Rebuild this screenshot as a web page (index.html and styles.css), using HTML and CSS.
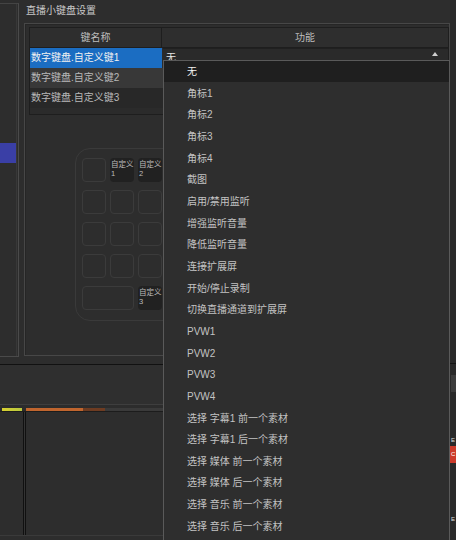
FILE: index.html
```html
<!DOCTYPE html>
<html lang="zh-CN">
<head>
<meta charset="utf-8">
<title>直播小键盘设置</title>
<link rel="stylesheet" href="styles.css">
</head>
<body>
<div class="window">
  <div class="main">
    <div class="top">
      <div class="leftpanel"><div class="lp-inner"><div class="lp-sel"></div></div></div>
      <div class="group">
        <div class="group-title">直播小键盘设置</div>
        <div class="group-frame">
          <div class="table">
            <div class="thead">
              <div class="th c1">键名称</div>
              <div class="th c2">功能</div>
            </div>
            <div class="tr sel">
              <div class="td c1">数字键盘.自定义键1</div>
              <div class="td c2">
                <div class="combo"><span class="combo-text">无</span>
                  <svg class="combo-arrow" width="8" height="6" viewBox="0 0 8 6"><path d="M4 1 L7 5 L1 5 Z" fill="#cfcfcf"/></svg>
                </div>
              </div>
            </div>
            <div class="tr alt"><div class="td c1">数字键盘.自定义键2</div><div class="td c2"></div></div>
            <div class="tr dark"><div class="td c1">数字键盘.自定义键3</div><div class="td c2"></div></div>
          </div>
          <div class="keypad">
            <div class="key"></div>
            <div class="key lab"><span>自定义</span><span>1</span></div>
            <div class="key lab"><span>自定义</span><span>2</span></div>
            <div class="key"></div>
            <div class="key"></div><div class="key"></div><div class="key"></div><div class="key"></div>
            <div class="key"></div><div class="key"></div><div class="key"></div><div class="key"></div>
            <div class="key"></div><div class="key"></div><div class="key"></div><div class="key"></div>
            <div class="key wide"></div>
            <div class="key lab"><span>自定义</span><span>3</span></div>
            <div class="key"></div>
          </div>
        </div>
      </div>
    </div>
    <div class="hline"></div>
    <div class="midbar"></div>
    <div class="meters">
      <div class="m-yellow"></div>
      <div class="m-sep"></div>
      <div class="m-orange"></div>
      <div class="m-brown"></div>
      <div class="m-rest"></div>
    </div>
    <div class="bottom">
      <div class="b-left"></div>
      <div class="b-sep"></div>
      <div class="b-main"></div>
    </div>
  </div>
  <div class="rstrip">
    <div class="rs-top"></div>
    <div class="rs-line"></div>
    <div class="rs-gap1"></div>
    <div class="rs-block"></div>
    <div class="rs-gap2"></div>
    <div class="rs-text">E</div>
    <div class="rs-red">C</div>
    <div class="rs-gap3"></div>
    <div class="rs-text">E</div>
  </div>
  <div class="popup">
    <div class="item hi">无</div>
    <div class="item">角标1</div>
    <div class="item">角标2</div>
    <div class="item">角标3</div>
    <div class="item">角标4</div>
    <div class="item">截图</div>
    <div class="item">启用/禁用监听</div>
    <div class="item">增强监听音量</div>
    <div class="item">降低监听音量</div>
    <div class="item">连接扩展屏</div>
    <div class="item">开始/停止录制</div>
    <div class="item">切换直播通道到扩展屏</div>
    <div class="item">PVW1</div>
    <div class="item">PVW2</div>
    <div class="item">PVW3</div>
    <div class="item">PVW4</div>
    <div class="item">选择 字幕1 前一个素材</div>
    <div class="item">选择 字幕1 后一个素材</div>
    <div class="item">选择 媒体 前一个素材</div>
    <div class="item">选择 媒体 后一个素材</div>
    <div class="item">选择 音乐 前一个素材</div>
    <div class="item">选择 音乐 后一个素材</div>
  </div>
</div>
</body>
</html>
```
FILE: styles.css
```css
* { box-sizing: border-box; }
html, body { margin: 0; padding: 0; }
body {
  width: 456px;
  height: 540px;
  overflow: hidden;
  background: #2d2d2d;
  font-family: "Liberation Sans", "Noto Sans CJK SC", sans-serif;
  font-size: 10px;
  color: #c2c2c2;
}
.window {
  position: relative;
  display: flex;
  width: 456px;
  height: 540px;
}
.main {
  width: 450px;
  display: flex;
  flex-direction: column;
}
.top {
  display: flex;
  height: 364px;
}
.leftpanel {
  width: 20px;
  margin-top: 3px;
  height: 354px;
  border-top: 1px solid #444;
  border-right: 1px solid #4a4a4a;
  border-bottom: 1px solid #4a4a4a;
}
.lp-inner {
  width: 17px;
  height: 100%;
  border-right: 1px solid #383838;
  padding-top: 139px;
}
.lp-sel {
  width: 16px;
  height: 20px;
  background: #3a3fa6;
}
.group {
  flex: 1;
  margin-left: 5px;
  display: flex;
  flex-direction: column;
}
.group-title {
  height: 23px;
  line-height: 21px;
  padding-left: 2px;
  color: #c8c8c8;
}
.group-frame {
  height: 333px;
  border: 1px solid #474747;
  box-shadow: inset 1px 1px 0 #262626;
  padding: 3px 0 0 4px;
}
.table {
  width: 420px;
  height: 88px;
  border: 1px solid #1e1e1e;
  background: #2b2b2b;
}
.thead {
  display: flex;
  height: 20px;
  border-bottom: 1px solid #1e1e1e;
  background: #2e2e2e;
}
.th {
  line-height: 19px;
  text-align: center;
  color: #bdbdbd;
}
.c1 { width: 132px; flex: none; }
.c2 { flex: 1; }
.th.c1 { border-right: 1px solid #1e1e1e; }
.tr {
  display: flex;
  height: 20px;
}
.td {
  line-height: 20px;
  white-space: nowrap;
  overflow: hidden;
}
.td.c1 { padding-left: 1px; }
.tr.sel .c1 { background: #1b6dc2; color: #f2f2f2; }
.tr.alt { background: #383838; }
.tr.dark { background: #282828; }
.tr.alt .c1, .tr.dark .c1 { color: #b8b8b8; }
.combo {
  height: 20px;
  margin-left: 1px;
  background: #2a2a2a;
  border-top: 1px solid #202020;
  display: flex;
  justify-content: space-between;
  align-items: flex-start;
  padding: 0 9px 0 3px;
}
.combo-text { line-height: 18px; color: #e6e6e6; }
.combo-arrow { margin-top: 2px; }
.keypad {
  margin: 33px 0 0 46px;
  width: 150px;
  height: 173px;
  border: 1px solid #3a3a3a;
  border-radius: 15px;
  padding: 9px 6px;
  display: grid;
  grid-template-columns: repeat(4, 24px);
  grid-auto-rows: 24px;
  gap: 8px 4px;
}
.key {
  border: 1px solid #3b3b3b;
  border-radius: 4px;
}
.key.wide { grid-column: span 2; }
.key.lab {
  border: none;
  background: #212121;
  display: flex;
  flex-direction: column;
  padding: 2px 0 0 1px;
  font-size: 7.5px;
  line-height: 9px;
  color: #bcbcbc;
  white-space: nowrap;
  overflow: hidden;
}
.hline {
  height: 1px;
  background: #111;
}
.midbar {
  height: 40px;
  background: #2f2f2f;
  border-bottom: 1px solid #3e3e3e;
}
.meters {
  display: flex;
  height: 7px;
  padding: 3px 0 0 2px;
  background: #2c2c2c;
  border-bottom: 1px solid #1c1c1c;
}
.meters div { height: 3px; }
.m-yellow { width: 20px; background: linear-gradient(90deg, #d8d030, #b8c840); }
.m-sep { width: 4px; }
.m-orange { width: 57px; background: #c0652e; }
.m-brown { width: 22px; background: #6e3c22; }
.m-rest { flex: 1; background: #3a3a3a; }
.bottom {
  flex: 1;
  display: flex;
  border-bottom: 1px solid #3a3a3a;
  margin-bottom: 4px;
}
.b-left { width: 23px; }
.b-sep {
  width: 3px;
  border-left: 1px solid #101010;
  border-right: 1px solid #101010;
  background: #333;
}
.b-main { flex: 1; }
.rstrip {
  width: 6px;
  display: flex;
  flex-direction: column;
  background: #2a2a2a;
  overflow: hidden;
}
.rs-top { height: 363px; }
.rs-line { height: 1px; background: #151515; }
.rs-gap1 { height: 11px; }
.rs-block { height: 17px; background: #3d3d3d; margin-left: 1px; }
.rs-gap2 { height: 42px; }
.rs-text {
  height: 12px;
  font-size: 6px;
  line-height: 12px;
  padding-left: 1px;
  color: #ddd;
}
.rs-red {
  height: 17px;
  background: #cc3b2b;
  color: #fff;
  font-size: 6px;
  line-height: 17px;
  padding-left: 1px;
}
.rs-gap3 { height: 50px; }
.popup {
  position: absolute;
  left: 163px;
  top: 60px;
  width: 287px;
  height: 490px;
  background: #2e2e2e;
  border: 1px solid #5a5a5a;
  overflow: hidden;
}
.item {
  height: 21.66px;
  line-height: 21.66px;
  padding-left: 23px;
  color: #c3c3c3;
  white-space: nowrap;
}
.item.hi {
  height: 21px;
  line-height: 21px;
  margin-bottom: 0.66px;
  background: #1f1f1f;
  color: #f4f4f4;
}
```
